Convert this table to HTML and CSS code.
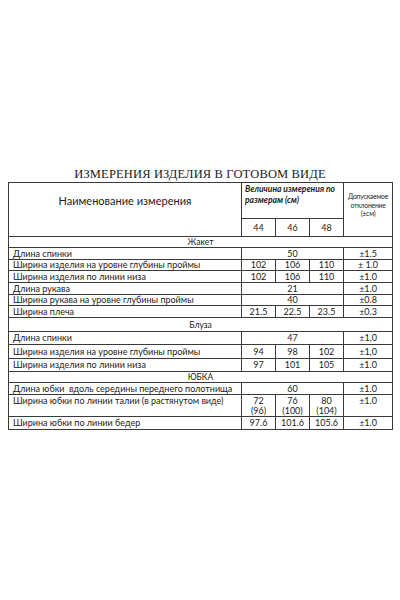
FILE: index.html
```html
<!DOCTYPE html>
<html lang="ru">
<head>
<meta charset="utf-8">
<title>Измерения изделия в готовом виде</title>
<link rel="stylesheet" href="styles.css">
</head>
<body>
<main class="page">
  <h1 class="title">ИЗМЕРЕНИЯ ИЗДЕЛИЯ В ГОТОВОМ ВИДЕ</h1>
  <table class="sheet">
    <colgroup>
      <col class="c-name">
      <col class="c-size">
      <col class="c-size">
      <col class="c-size">
      <col class="c-tol">
    </colgroup>
    <thead>
      <tr class="h-head1">
        <th rowspan="2" class="head-name">Наименование измерения</th>
        <th colspan="3" class="head-sizes">Величина измерения по размерам (см)</th>
        <th rowspan="2" class="head-tol">Допускаемое<br>отклонение<br>(±см)</th>
      </tr>
      <tr class="h-head2">
        <th class="size">44</th>
        <th class="size">46</th>
        <th class="size">48</th>
      </tr>
    </thead>
    <tbody>
      <tr class="h10 section"><td colspan="5">Жакет</td></tr>
      <tr class="h12"><td class="name">Длина спинки</td><td colspan="3" class="num">50</td><td class="num">±1.5</td></tr>
      <tr class="h11"><td class="name">Ширина изделия на уровне глубины проймы</td><td class="num">102</td><td class="num">106</td><td class="num">110</td><td class="num">± 1.0</td></tr>
      <tr class="h12"><td class="name">Ширина изделия по линии низа</td><td class="num">102</td><td class="num">106</td><td class="num">110</td><td class="num">±1.0</td></tr>
      <tr class="h12"><td class="name">Длина рукава</td><td colspan="3" class="num">21</td><td class="num">±1.0</td></tr>
      <tr class="h11"><td class="name">Ширина рукава на уровне глубины проймы</td><td colspan="3" class="num">40</td><td class="num">±0.8</td></tr>
      <tr class="h12"><td class="name">Ширина плеча</td><td class="num">21.5</td><td class="num">22.5</td><td class="num">23.5</td><td class="num">±0.3</td></tr>
      <tr class="h14 section"><td colspan="5">Блуза</td></tr>
      <tr class="h13"><td class="name">Длина спинки</td><td colspan="3" class="num">47</td><td class="num">±1,0</td></tr>
      <tr class="h14"><td class="name">Ширина изделия на уровне глубины проймы</td><td class="num">94</td><td class="num">98</td><td class="num">102</td><td class="num">±1,0</td></tr>
      <tr class="h13"><td class="name">Ширина изделия по линии низа</td><td class="num">97</td><td class="num">101</td><td class="num">105</td><td class="num">±1.0</td></tr>
      <tr class="h11 section"><td colspan="5">ЮБКА</td></tr>
      <tr class="h12"><td class="name">Длина юбки&nbsp; вдоль середины переднего полотнища</td><td colspan="3" class="num">60</td><td class="num">±1.0</td></tr>
      <tr class="h22 top"><td class="name">Ширина юбки по линии талии (в растянутом виде)</td><td class="num">72<br>(96)</td><td class="num">76<br>(100)</td><td class="num">80<br>(104)</td><td class="num">±1.0</td></tr>
      <tr class="h13"><td class="name">Ширина юбки по линии бедер</td><td class="num">97.6</td><td class="num">101.6</td><td class="num">105.6</td><td class="num">±1.0</td></tr>
    </tbody>
  </table>
</main>
</body>
</html>
```

FILE: styles.css
```css
html, body {
  margin: 0;
  padding: 0;
  background: #ffffff;
}

.page {
  padding: 167px 8px 0 8px;
  color: #1c1c1c;
  font-family: "Lato", "Liberation Sans", sans-serif;
}

.title {
  margin: 0;
  text-align: center;
  font-family: "Liberation Serif", "Times New Roman", serif;
  font-weight: normal;
  font-size: 12.5px;
  line-height: 15px;
  letter-spacing: 0.15px;
  color: #222;
}

.sheet {
  width: 384px;
  border-collapse: collapse;
  table-layout: fixed;
  font-size: 9px;
  line-height: 10px;
}

.c-name { width: 233px; }
.c-size { width: 34px; }
.c-tol { width: 49px; }

.sheet th,
.sheet td {
  border: 1px solid #3a3a3a;
  padding: 0;
  font-weight: normal;
}

.h-head1 { height: 36px; }
.h-head2 { height: 18px; }
.h10 { height: 10px; }
.h11 { height: 11px; }
.h12 { height: 12px; }
.h13 { height: 13px; }
.h14 { height: 14px; }
.h22 { height: 22px; }

.sheet .head-name {
  font-size: 11px;
  line-height: 14px;
  text-align: center;
  vertical-align: top;
  padding-top: 11px;
}

.sheet .head-sizes {
  font-size: 8.5px;
  line-height: 11px;
  font-weight: bold;
  font-style: italic;
  text-align: left;
  vertical-align: top;
  padding: 1px 2px 0 3px;
}

.sheet .head-tol {
  font-size: 6.8px;
  line-height: 8.5px;
  text-align: center;
  vertical-align: middle;
  letter-spacing: -0.2px;
  padding-bottom: 9px;
}

.size {
  text-align: center;
  vertical-align: middle;
}

.section td {
  text-align: center;
  vertical-align: middle;
  font-size: 8.5px;
}

.sheet .name {
  padding-left: 4px;
  text-align: left;
  vertical-align: middle;
  white-space: nowrap;
}

.num {
  text-align: center;
  vertical-align: middle;
}

.sheet .top td {
  vertical-align: top;
  padding-top: 1px;
}
```
